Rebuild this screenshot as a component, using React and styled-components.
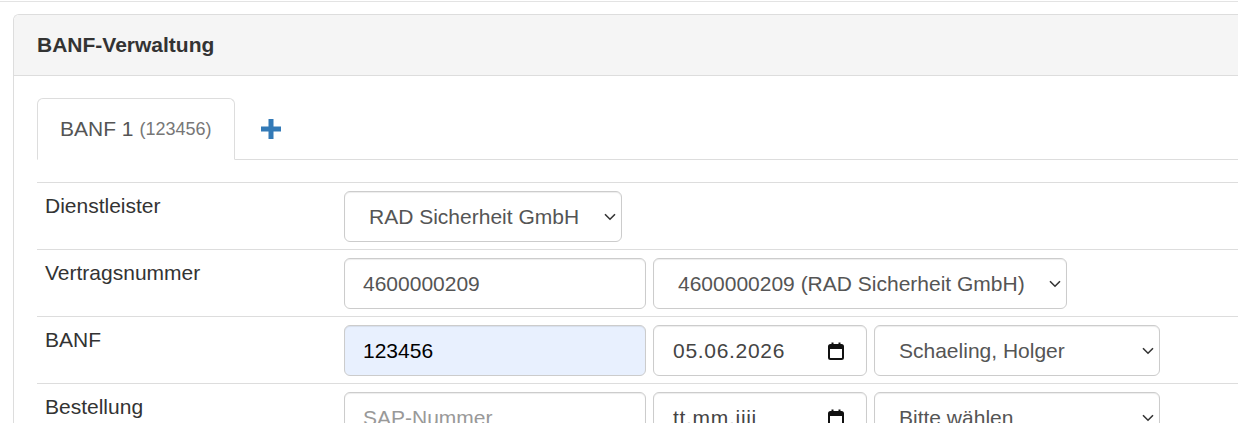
import styled, { createGlobalStyle } from "styled-components";

const GlobalStyle = createGlobalStyle`
  body {
    margin: 0;
    background: #fff;
    font-family: "Liberation Sans", Arial, sans-serif;
    overflow: hidden;
  }
`;

function CalendarIcon() {
  return (
    <svg width="16" height="18" viewBox="0 0 16 18">
      <rect x="1" y="3" width="14" height="14" rx="1.5" fill="none" stroke="#111" strokeWidth="2" />
      <rect x="1" y="3" width="14" height="4" fill="#111" />
      <rect x="3.5" y="0.5" width="2" height="4" fill="#111" />
      <rect x="10.5" y="0.5" width="2" height="4" fill="#111" />
    </svg>
  );
}

function PlusIcon() {
  return (
    <svg width="20" height="20" viewBox="0 0 20 20">
      <rect x="7.5" y="0" width="5" height="20" fill="#337ab7" />
      <rect x="0" y="7.5" width="20" height="5" fill="#337ab7" />
    </svg>
  );
}

function Chevron() {
  return (
    <ChevronMark width="12" height="8" viewBox="0 0 12 8">
      <path d="M1 1.2 L6 6.2 L11 1.2" fill="none" stroke="#333" strokeWidth="1.6" />
    </ChevronMark>
  );
}

// select with a drawn arrow instead of the native one
function Dropdown({ w, value }) {
  return (
    <SelectWrap $w={w}>
      <Select defaultValue={value}>
        <option value={value}>{value}</option>
      </Select>
      <Chevron />
    </SelectWrap>
  );
}

export default function App() {
  return (
    <Page>
      <GlobalStyle />
      <TopRule />
      <Panel>
        <PanelHeading>BANF-Verwaltung</PanelHeading>
        <PanelBody>
          <Tabs>
            <Tab $active>
              BANF 1 <small>(123456)</small>
            </Tab>
            <Tab>
              <PlusIcon />
            </Tab>
          </Tabs>
          <Table>
            <tbody>
              <tr>
                <LabelCell>Dienstleister</LabelCell>
                <Cell>
                  <Controls>
                    <Dropdown w={278} value="RAD Sicherheit GmbH" />
                  </Controls>
                </Cell>
              </tr>
              <tr>
                <LabelCell>Vertragsnummer</LabelCell>
                <Cell>
                  <Controls>
                    <Input $w={302} defaultValue="4600000209" />
                    <Dropdown w={414} value="4600000209 (RAD Sicherheit GmbH)" />
                  </Controls>
                </Cell>
              </tr>
              <tr>
                <LabelCell>BANF</LabelCell>
                <Cell>
                  <Controls>
                    <Input $w={302} $autofill defaultValue="123456" />
                    <DateBox>
                      <span>05.06.2026</span>
                      <CalendarIcon />
                    </DateBox>
                    <Dropdown w={286} value="Schaeling, Holger" />
                  </Controls>
                </Cell>
              </tr>
              <tr>
                <LabelCell>Bestellung</LabelCell>
                <Cell>
                  <Controls>
                    <Input $w={302} placeholder="SAP-Nummer" />
                    <DateBox>
                      <span>tt.mm.jjjj</span>
                      <CalendarIcon />
                    </DateBox>
                    <Dropdown w={286} value="Bitte wählen" />
                  </Controls>
                </Cell>
              </tr>
            </tbody>
          </Table>
        </PanelBody>
      </Panel>
    </Page>
  );
}

const Page = styled.div`
  width: 1238px;
  height: 423px;
  overflow: hidden;
`;

const TopRule = styled.div`
  margin-top: 1px;
  height: 1px;
  background: #e3e3e3;
`;

const Panel = styled.div`
  margin: 12px 0 0 13px;
  width: 1260px;
  border: 1px solid #ddd;
  border-right: none;
  border-radius: 6px 0 0 0;
  background: #fff;
`;

const PanelHeading = styled.div`
  background: #f5f5f5;
  border-bottom: 1px solid #ddd;
  border-radius: 5px 0 0 0;
  padding: 15px 23px;
  font-size: 21px;
  line-height: 30px;
  font-weight: bold;
  color: #333;
`;

const PanelBody = styled.div`
  padding: 22px 0 0 23px;
`;

const Tabs = styled.div`
  display: flex;
  align-items: flex-end;
  border-bottom: 1px solid #ddd;
`;

const Tab = styled.div`
  display: flex;
  align-items: center;
  gap: 6px;
  height: 60px;
  margin-right: 3px;
  margin-bottom: -1px;
  padding: 0 22px;
  box-sizing: content-box;
  font-size: 21px;
  color: #555;
  background: ${(p) => (p.$active ? "#fff" : "transparent")};
  border: 1px solid ${(p) => (p.$active ? "#ddd" : "transparent")};
  border-bottom-color: transparent;
  border-radius: 6px 6px 0 0;

  small {
    font-size: 18px;
    color: #777;
  }
`;

const Table = styled.table`
  margin-top: 22px;
  width: 100%;
  border-collapse: collapse;
`;

const LabelCell = styled.td`
  width: 284px;
  padding: 8px 8px 7px 8px;
  border-top: 1px solid #ddd;
  vertical-align: top;
  font-size: 21px;
  line-height: 30px;
  color: #333;
`;

const Cell = styled.td`
  padding: 8px 8px 7px 7px;
  border-top: 1px solid #ddd;
  vertical-align: top;
`;

const Controls = styled.div`
  display: flex;
  gap: 7px;
`;

const fieldBase = `
  box-sizing: border-box;
  height: 51px;
  border: 1px solid #ccc;
  border-radius: 6px;
  font-family: "Liberation Sans", Arial, sans-serif;
  font-size: 21px;
  color: #555;
  box-shadow: inset 0 1px 1px rgba(0, 0, 0, 0.075);
`;

const Input = styled.input`
  ${fieldBase}
  width: ${(p) => p.$w}px;
  padding: 0 18px;
  background: ${(p) => (p.$autofill ? "#e8f0fe" : "#fff")};
  color: ${(p) => (p.$autofill ? "#000" : "#555")};
  outline: none;

  &::placeholder {
    color: #999;
  }
`;

const SelectWrap = styled.div`
  position: relative;
  width: ${(p) => p.$w}px;
  flex: none;
`;

const Select = styled.select`
  ${fieldBase}
  width: 100%;
  appearance: none;
  padding: 0 30px 0 24px;
  background: #fff;
  outline: none;
`;

const ChevronMark = styled.svg`
  position: absolute;
  right: 6px;
  top: 22px;
  pointer-events: none;
`;

const DateBox = styled.div`
  ${fieldBase}
  width: 214px;
  flex: none;
  display: flex;
  align-items: center;
  justify-content: space-between;
  padding: 0 22px 0 19px;
  background: #fff;
  letter-spacing: 0.7px;
  color: #444;
`;
